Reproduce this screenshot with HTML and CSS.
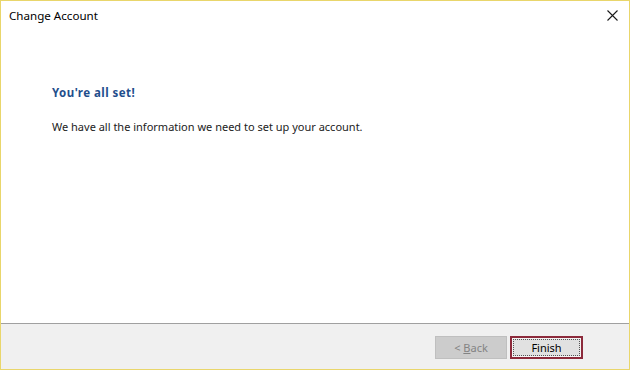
FILE: index.html
```html
<!DOCTYPE html>
<html>
<head>
<meta charset="utf-8">
<link rel="stylesheet" href="styles.css">
</head>
<body>
<div class="window">
  <div class="titlebar">
    <span class="title">Change Account</span>
    <span class="close" aria-label="Close">
      <svg width="11" height="11" viewBox="0 0 11 11"><path d="M0.5 0.5 L10.5 10.5 M10.5 0.5 L0.5 10.5" stroke="#1a1a1a" stroke-width="1.1" fill="none"/></svg>
    </span>
  </div>
  <div class="content">
    <div class="heading">You're all set!</div>
    <div class="message">We have all the information we need to set up your account.</div>
  </div>
  <div class="footer">
    <button class="btn btn-disabled" disabled>&lt;&nbsp;<u>B</u>ack</button>
    <button class="btn btn-default"><span class="focus">Finish</span></button>
  </div>
</div>
</body>
</html>
```
FILE: styles.css
```css
html, body {
  margin: 0;
  padding: 0;
  background: #ffffff;
}
body {
  font-family: "Noto Sans", "Open Sans", sans-serif;
  font-size: 11px;
  color: #1a1a1a;
}
.window {
  width: 628px;
  height: 368px;
  border: 1px solid #e9d66b;
  display: flex;
  flex-direction: column;
  background: #ffffff;
}
.titlebar {
  height: 30px;
  display: flex;
  align-items: center;
  justify-content: space-between;
  padding: 0 11px 0 8px;
}
.title {
  font-size: 11.6px;
  color: #000;
  margin-top: -1px;
}
.close {
  display: flex;
  margin-top: -1px;
}
.content {
  flex: 1;
  padding: 54px 0 0 51px;
}
.heading {
  font-weight: bold;
  color: #1f4e8c;
  font-size: 11.5px;
  line-height: 16px;
  letter-spacing: 0.45px;
}
.message {
  margin-top: 18px;
  line-height: 16px;
  color: #222;
}
.footer {
  border-top: 1px solid #a0a0a0;
  background: #f0f0f0;
  display: flex;
  justify-content: flex-end;
  align-items: flex-start;
  gap: 3px;
  padding: 12px 46px 0 0;
  box-sizing: border-box;
  height: 46px;
}
.btn {
  width: 73px;
  height: 23px;
  font-family: inherit;
  font-size: 11px;
  padding: 0;
  margin: 0;
  box-sizing: border-box;
  display: flex;
  align-items: center;
  justify-content: center;
}
.btn-disabled {
  width: 72px;
  background: #cccccc;
  border: 1px solid #bfbfbf;
  color: #838383;
}
.btn-default {
  background: #e1e1e1;
  border: 2px solid #8c2a3b;
  color: #000;
  padding: 1px;
}
.focus {
  display: flex;
  align-items: center;
  justify-content: center;
  width: 100%;
  height: 100%;
  box-sizing: border-box;
  border: 1px dotted #555;
  outline: 1px solid #f4f4f4;
}
```
